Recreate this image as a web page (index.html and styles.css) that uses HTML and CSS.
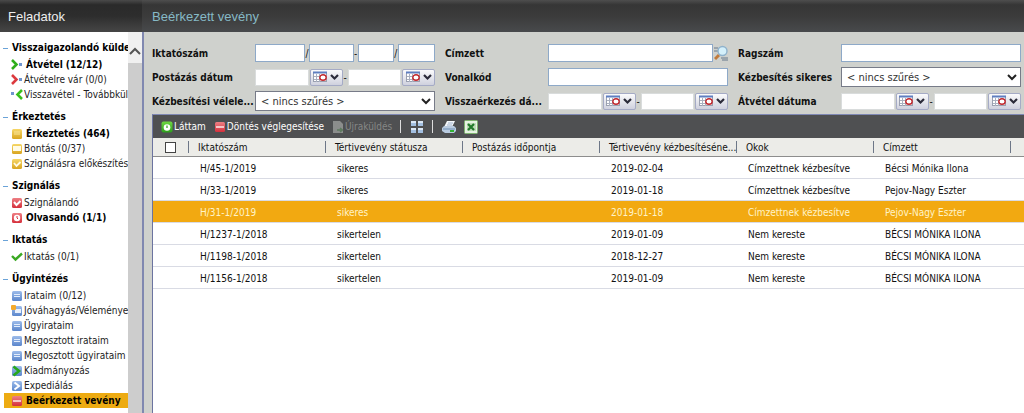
FILE: index.html
```
<!DOCTYPE html>
<html lang="hu">
<head>
<meta charset="UTF-8" />
<meta name="viewport" content="width=device-width, initial-scale=1" />
<title>Beérkezett vevény</title>
<link rel="stylesheet" href="styles.css">
</head>
<body>

<svg class="defs" aria-hidden="true">
  <defs>
    <linearGradient id="gYellow" x1="0" y1="0" x2="0" y2="1"><stop offset="0" stop-color="#f6d768"/><stop offset="1" stop-color="#d9a520"/></linearGradient>
    <linearGradient id="gRed" x1="0" y1="0" x2="0" y2="1"><stop offset="0" stop-color="#ee7f84"/><stop offset="1" stop-color="#d5303c"/></linearGradient>
    <linearGradient id="gBlue" x1="0" y1="0" x2="0" y2="1"><stop offset="0" stop-color="#9dbcea"/><stop offset="1" stop-color="#5b86cc"/></linearGradient>
    <linearGradient id="gGreen" x1="0" y1="0" x2="0" y2="1"><stop offset="0" stop-color="#6fd843"/><stop offset="1" stop-color="#2c9e1c"/></linearGradient>
  </defs>
  <symbol id="i-in-green" viewBox="0 0 12 12"><path d="M1 1l4.500 4.500L1 10" fill="none" stroke="#2fae1c" stroke-width="2.600"/><rect x="8" y="4" width="3" height="3" fill="#6f95cf"/></symbol>
  <symbol id="i-in-red" viewBox="0 0 12 12"><path d="M1 1l4.500 4.500L1 10" fill="none" stroke="#dc3a3f" stroke-width="2.600"/><rect x="8" y="4" width="3" height="3" fill="#6f95cf"/></symbol>
  <symbol id="i-back" viewBox="0 0 12 12"><path d="M11 1L6.500 5.500 11 10" fill="none" stroke="#38bf1c" stroke-width="2.600"/><rect x="0" y="3" width="3" height="3" fill="#6f95cf"/></symbol>
  <symbol id="i-yellow" viewBox="0 0 12 12"><rect x="1" y="1" width="10" height="10" rx="1.500" fill="url(#gYellow)"/><path d="M3 4h6M3 6h6" stroke="#f9e59a"/></symbol>
  <symbol id="i-yellow-open" viewBox="0 0 12 12"><rect x="1" y="1" width="10" height="10" rx="1.500" fill="url(#gYellow)"/><rect x="2" y="3" width="8" height="5" fill="#fffbe6"/></symbol>
  <symbol id="i-yellow-check" viewBox="0 0 12 12"><rect x="1" y="1" width="10" height="10" rx="1.500" fill="url(#gYellow)"/><path d="M3 5l2.500 3L9.500 4" fill="none" stroke="#fffbe6" stroke-width="1.800"/></symbol>
  <symbol id="i-red-check" viewBox="0 0 12 12"><rect x="1" y="1" width="10" height="10" rx="1.500" fill="url(#gRed)"/><path d="M3 5l2.500 3L9.500 4" fill="none" stroke="#fff" stroke-width="2"/></symbol>
  <symbol id="i-red-eye" viewBox="0 0 12 12"><rect x="1" y="1" width="10" height="10" rx="1.500" fill="url(#gRed)"/><circle cx="6" cy="6" r="3.200" fill="#fff"/><path d="M6 4v2l1 1" fill="none" stroke="#d5303c"/></symbol>
  <symbol id="i-check" viewBox="0 0 12 12"><path d="M1 5l3.500 3.500L11 2.500" fill="none" stroke="#3aa822" stroke-width="2.400"/></symbol>
  <symbol id="i-blue" viewBox="0 0 12 12"><rect x="1" y="1" width="10" height="10" rx="1.500" fill="url(#gBlue)"/><path d="M3 4.500h6M3 6.500h6" stroke="#e3edfb"/></symbol>
  <symbol id="i-blue-new" viewBox="0 0 12 12"><rect x="1" y="1" width="10" height="10" rx="1.500" fill="url(#gBlue)"/><rect x="4" y="4" width="6" height="4" fill="#e8effa"/><rect x="0" y="0" width="5" height="5" rx="1" fill="#f3a92c"/></symbol>
  <symbol id="i-blue-go" viewBox="0 0 12 12"><rect x="1" y="1" width="10" height="10" rx="1.500" fill="url(#gBlue)"/><path d="M2.500 1.500L8 6l-5.500 4.500" fill="none" stroke="#26a81c" stroke-width="2.600"/></symbol>
  <symbol id="i-blue-send" viewBox="0 0 12 12"><rect x="1" y="1" width="10" height="10" rx="1.500" fill="url(#gBlue)"/><path d="M3.500 2.500L8 6 3.500 9.500" fill="none" stroke="#fff" stroke-width="2"/></symbol>
  <symbol id="i-red-bar" viewBox="0 0 12 12"><rect x="1" y="1" width="10" height="10" rx="1.500" fill="url(#gRed)"/><path d="M2 6h8" stroke="#fbe3e3" stroke-width="1.600"/></symbol>
  <symbol id="i-seen" viewBox="0 0 12 12"><rect x="0.500" y="0.500" width="11" height="11" rx="2" fill="url(#gGreen)"/><circle cx="6" cy="6.500" r="3.300" fill="#fff"/><path d="M6 4.500v2.500" stroke="#2c9e1c" stroke-width="1.200"/></symbol>
  <symbol id="i-resend" viewBox="0 0 12 12"><path d="M1 0h7l3 3v9H1z" fill="#8b8d8c"/><path d="M5 9h5M8 7l2.500 2L8 11" fill="none" stroke="#5d7a5d" stroke-width="1.400"/></symbol>
  <symbol id="i-grid" viewBox="0 0 14 14"><path d="M1 1h5v5H1zM8 1h5v5H8zM1 8h5v5H1zM8 8h5v5H8z" fill="#a3bfe0"/><path d="M1 1h5v2H1zM8 1h5v2H8zM1 8h5v2H1zM8 8h5v2H8z" fill="#dbe7f5"/></symbol>
  <symbol id="i-print" viewBox="0 0 14 14"><path d="M5 1h8l-3 6H2z" fill="#f4f7fb"/><path d="M6 3h5M5 5h5" stroke="#9fb2cc"/><path d="M2 6h10l2 2v3l-2 2H3L0 11V8z" fill="#b9cbe0"/><path d="M1 9h12" stroke="#6f8fb5"/><path d="M8 11h4" stroke="#34b233" stroke-width="2"/></symbol>
  <symbol id="i-excel" viewBox="0 0 14 14"><rect x="0.500" y="0.500" width="13" height="13" rx="1" fill="#e6f3e2" stroke="#7eb36f"/><rect x="3" y="3" width="9" height="8" fill="#bfdcb8"/><path d="M4 4l6 6M10 4l-6 6" stroke="#217a2a" stroke-width="2.200"/></symbol>
  <symbol id="i-search" viewBox="0 0 14 16"><path d="M0 3h4M0 6h4M7 13h7M8 15h6" stroke="#66788c"/><path d="M5 10l-4 4" stroke="#c07a3c" stroke-width="3"/><circle cx="8.500" cy="6" r="4.500" fill="#d4f0fb" stroke="#8fb2cc" stroke-width="1.400"/></symbol>
  <symbol id="i-cal" viewBox="0 0 26 12"><rect x="0.500" y="1.500" width="13" height="9" fill="#fff" stroke="#9aa0b0"/><path d="M0 1.500h14" stroke="#5f7fc0" stroke-width="2"/><path d="M3.500 3v8M6.500 3v8M1 5.500h12M1 8.500h12" stroke="#aab0c0"/><ellipse cx="10" cy="6.500" rx="3.200" ry="2.800" fill="#fff" stroke="#c0272d" stroke-width="1.400"/><path d="M18 4l3.500 3.500L25 4" fill="none" stroke="#2b2b3a" stroke-width="2.200"/></symbol>
</svg>

<div class="app">
  <aside class="sidebar">
    <h2 class="bar">Feladatok</h2>
    <div class="side-body">
      <nav class="tree">
        <section>
          <h3>Visszaigazolandó külde</h3>
          <a href="#" class="strong"><svg class="icon"><use href="#i-in-green"/></svg>Átvétel (12/12)</a>
          <a href="#"><svg class="icon"><use href="#i-in-red"/></svg>Átvételre vár (0/0)</a>
          <a href="#"><svg class="icon"><use href="#i-back"/></svg>Visszavétel - Továbbkül</a>
        </section>
        <section>
          <h3>Érkeztetés</h3>
          <a href="#" class="strong"><svg class="icon"><use href="#i-yellow"/></svg>Érkeztetés (464)</a>
          <a href="#"><svg class="icon"><use href="#i-yellow-open"/></svg>Bontás (0/37)</a>
          <a href="#"><svg class="icon"><use href="#i-yellow-check"/></svg>Szignálásra előkészítés</a>
        </section>
        <section>
          <h3>Szignálás</h3>
          <a href="#"><svg class="icon"><use href="#i-red-check"/></svg>Szignálandó</a>
          <a href="#" class="strong"><svg class="icon"><use href="#i-red-eye"/></svg>Olvasandó (1/1)</a>
        </section>
        <section>
          <h3>Iktatás</h3>
          <a href="#"><svg class="icon"><use href="#i-check"/></svg>Iktatás (0/1)</a>
        </section>
        <section>
          <h3>Ügyintézés</h3>
          <a href="#"><svg class="icon"><use href="#i-blue"/></svg>Irataim (0/12)</a>
          <a href="#"><svg class="icon"><use href="#i-blue-new"/></svg>Jóváhagyás/Véleménye</a>
          <a href="#"><svg class="icon"><use href="#i-blue"/></svg>Ügyirataim</a>
          <a href="#"><svg class="icon"><use href="#i-blue"/></svg>Megosztott irataim</a>
          <a href="#"><svg class="icon"><use href="#i-blue"/></svg>Megosztott ügyirataim</a>
          <a href="#"><svg class="icon"><use href="#i-blue-go"/></svg>Kiadmányozás</a>
          <a href="#"><svg class="icon"><use href="#i-blue-send"/></svg>Expediálás</a>
          <a href="#" class="strong active"><svg class="icon"><use href="#i-red-bar"/></svg>Beérkezett vevény</a>
        </section>
      </nav>
      <div class="scroll">
        <button class="scroll-up" aria-label="Fel"><svg viewBox="0 0 12 8"><path d="M1 7l5-5 5 5" fill="none" stroke="#555" stroke-width="2"/></svg></button>
        <div class="thumb"></div>
      </div>
    </div>
  </aside>

  <main class="content">
    <h1 class="bar">Beérkezett vevény</h1>

    <form class="filters">
      <div class="field">
        <label for="ikt1">Iktatószám</label>
        <div class="ctrl number">
          <input type="text" id="ikt1" class="n1" /><span>/</span><input type="text" class="n2" aria-label="Iktatószám 2" /><span>-</span><input type="text" class="n3" aria-label="Iktatószám 3" /><span>/</span><input type="text" class="n4" aria-label="Iktatószám 4" />
        </div>
      </div>
      <div class="field">
        <label for="cimzett">Címzett</label>
        <div class="ctrl"><input type="text" id="cimzett" /><button type="button" class="lookup" aria-label="Keresés"><svg><use href="#i-search"/></svg></button></div>
      </div>
      <div class="field">
        <label for="ragszam">Ragszám</label>
        <div class="ctrl"><input type="text" id="ragszam" /></div>
      </div>

      <div class="field">
        <label for="post1">Postázás dátum</label>
        <div class="ctrl date">
          <input type="text" id="post1" /><button type="button" aria-label="Naptár"><svg><use href="#i-cal"/></svg></button><span>-</span><input type="text" aria-label="Postázás dátum vége" /><button type="button" aria-label="Naptár"><svg><use href="#i-cal"/></svg></button>
        </div>
      </div>
      <div class="field">
        <label for="vonalkod">Vonalkód</label>
        <div class="ctrl"><input type="text" id="vonalkod" /></div>
      </div>
      <div class="field">
        <label for="sikeres">Kézbesítés sikeres</label>
        <div class="ctrl"><select id="sikeres"><option>&lt; nincs szűrés &gt;</option></select></div>
      </div>

      <div class="field">
        <label for="velelem">Kézbesítési vélele...</label>
        <div class="ctrl"><select id="velelem"><option>&lt; nincs szűrés &gt;</option></select></div>
      </div>
      <div class="field">
        <label for="vissza1">Visszaérkezés dá...</label>
        <div class="ctrl date">
          <input type="text" id="vissza1" /><button type="button" aria-label="Naptár"><svg><use href="#i-cal"/></svg></button><span>-</span><input type="text" aria-label="Visszaérkezés dátum vége" /><button type="button" aria-label="Naptár"><svg><use href="#i-cal"/></svg></button>
        </div>
      </div>
      <div class="field">
        <label for="atvetel1">Átvétel dátuma</label>
        <div class="ctrl date">
          <input type="text" id="atvetel1" /><button type="button" aria-label="Naptár"><svg><use href="#i-cal"/></svg></button><span>-</span><input type="text" aria-label="Átvétel dátum vége" /><button type="button" aria-label="Naptár"><svg><use href="#i-cal"/></svg></button>
        </div>
      </div>
    </form>

    <div class="list">
      <div class="toolbar">
        <button><svg class="icon"><use href="#i-seen"/></svg>Láttam</button>
        <button><svg class="icon"><use href="#i-red-bar"/></svg>Döntés véglegesítése</button>
        <button disabled><svg class="icon"><use href="#i-resend"/></svg>Újraküldés</button>
        <span class="sep"></span>
        <button aria-label="Nézet"><svg class="tool"><use href="#i-grid"/></svg></button>
        <span class="sep"></span>
        <button aria-label="Nyomtatás"><svg class="tool"><use href="#i-print"/></svg></button>
        <button aria-label="Excel"><svg class="tool"><use href="#i-excel"/></svg></button>
      </div>
      <table>
        <colgroup><col class="c-check"><col class="c"><col class="c"><col class="c"><col class="c"><col class="c"><col class="c"><col></colgroup>
        <thead>
          <tr>
            <th><input type="checkbox" aria-label="Összes kijelölése" /></th>
            <th>Iktatószám</th>
            <th>Tértivevény státusza</th>
            <th>Postázás időpontja</th>
            <th>Tértivevény kézbesítéséne...</th>
            <th>Okok</th>
            <th>Címzett</th>
            <th></th>
          </tr>
        </thead>
        <tbody>
          <tr><td></td><td>H/45-1/2019</td><td>sikeres</td><td></td><td>2019-02-04</td><td>Címzettnek kézbesítve</td><td>Bécsi Mónika Ilona</td><td></td></tr>
          <tr><td></td><td>H/33-1/2019</td><td>sikeres</td><td></td><td>2019-01-18</td><td>Címzettnek kézbesítve</td><td>Pejov-Nagy Eszter</td><td></td></tr>
          <tr class="selected"><td></td><td>H/31-1/2019</td><td>sikeres</td><td></td><td>2019-01-18</td><td>Címzettnek kézbesítve</td><td>Pejov-Nagy Eszter</td><td></td></tr>
          <tr><td></td><td>H/1237-1/2018</td><td>sikertelen</td><td></td><td>2019-01-09</td><td>Nem kereste</td><td>BÉCSI MÓNIKA ILONA</td><td></td></tr>
          <tr><td></td><td>H/1198-1/2018</td><td>sikertelen</td><td></td><td>2018-12-27</td><td>Nem kereste</td><td>BÉCSI MÓNIKA ILONA</td><td></td></tr>
          <tr><td></td><td>H/1156-1/2018</td><td>sikertelen</td><td></td><td>2019-01-09</td><td>Nem kereste</td><td>BÉCSI MÓNIKA ILONA</td><td></td></tr>
        </tbody>
      </table>
    </div>
  </main>
</div>

</body>
</html>
```
FILE: styles.css
```
* {
  box-sizing: border-box;
}
body {
  margin: 0;
  font-family: "DejaVu Sans Condensed", "DejaVu Sans", Tahoma, sans-serif;
  font-size: 10px;
  color: #111;
  background: #fff;
}
button, input, select {
  font: inherit;
  color: inherit;
  margin: 0;
}
button {
  padding: 0;
  border: none;
  background: none;
}
.defs {
  position: absolute;
  width: 0;
  height: 0;
}
.app {
  display: flex;
  min-height: 100vh;
}
.bar {
  margin: 0;
  height: 32px;
  line-height: 33px;
  padding-left: 8px;
  font-family: "Liberation Sans", Arial, sans-serif;
  font-size: 13px;
  font-weight: 400;
  color: #eee;
  background: linear-gradient(#4a4a4a, #2a2a2a 15%, #2d2d2d 50%, #464646);
}

/* sidebar */
.sidebar {
  width: 142px;
  flex: none;
  display: flex;
  flex-direction: column;
}
.side-body {
  flex: 1;
  display: flex;
}
.tree {
  flex: 1;
  min-width: 0;
  padding-top: 7px;
  overflow: hidden;
}
.tree section {
  margin-bottom: 6px;
}
.tree h3 {
  margin: 0;
  padding-left: 12px;
  height: 18px;
  line-height: 18px;
  font-size: 10px;
  color: #000;
  white-space: nowrap;
  background: linear-gradient(#6aa3d8, #6aa3d8) 3px 9px / 5px 1px no-repeat;
}
.tree a {
  display: flex;
  align-items: center;
  gap: 1px;
  height: 15px;
  margin-left: 4px;
  padding-left: 7px;
  color: #222;
  text-decoration: none;
  white-space: nowrap;
}
.tree a.strong {
  gap: 3px;
  font-weight: 700;
  color: #000;
}
.tree a.active {
  background: #edab12;
}
.icon {
  width: 12px;
  height: 12px;
  flex: none;
}
.scroll {
  width: 14px;
  display: flex;
  flex-direction: column;
}
.scroll-up {
  height: 31px;
  padding: 6px 1px 0 1px;
  background: #f0f0f0;
}
.scroll-up svg {
  display: block;
  width: 12px;
  height: 8px;
}
.thumb {
  flex: 1;
  background: #cdcdcd;
}

/* content */
.content {
  flex: 1;
  min-width: 0;
  display: flex;
  flex-direction: column;
  background: #cfd1cd;
  box-shadow: inset 2px 0 #8088b0;
}
.content .bar {
  padding-left: 10px;
  color: #86b9c6;
  background: linear-gradient(#4e4e4e, #363636 15%, #3b3b3b 50%, #484a4c);
}
.filters {
  display: grid;
  grid-template-columns: repeat(3, 1fr);
  column-gap: 10px;
  row-gap: 4px;
  padding: 11px 3px 3px 10px;
}
.field {
  display: flex;
  align-items: center;
  height: 20px;
  min-width: 0;
}
.field label {
  width: 103px;
  flex: none;
  font-weight: 700;
  white-space: nowrap;
}
.ctrl {
  flex: 1;
  min-width: 0;
  display: flex;
  align-items: center;
}
.ctrl input {
  flex: 1;
  min-width: 0;
  height: 18px;
  padding: 0 3px;
  border: 1px solid #8ea9c8;
  background: #fff;
}
.number span {
  width: 4px;
  text-align: center;
}
.number .n1 { flex: 52; }
.number .n2 { flex: 45; }
.number .n3 { flex: 35; }
.number .n4 { flex: 36; }
.date input {
  height: 17px;
  border-color: #d9dcdc;
}
.date button {
  width: 33px;
  height: 17px;
  flex: none;
  margin-left: 1px;
  border: 1px solid #a5abc6;
  border-radius: 2px;
  background: linear-gradient(#fbfbfc, #cfd1de);
}
.date button svg {
  display: block;
  width: 26px;
  height: 12px;
  margin: 0 auto;
}
.date span {
  width: 5px;
  text-align: center;
}
.ctrl select {
  width: 100%;
  height: 20px;
  padding: 0 5px;
  font-size: 11px;
  color: #333;
  border: 1px solid #777b88;
  border-radius: 0;
  appearance: none;
  background: #fff url("data:image/svg+xml,%3Csvg xmlns='http://www.w3.org/2000/svg' viewBox='0 0 10 7'%3E%3Cpath d='M1 1l4 4 4-4' fill='none' stroke='%23222' stroke-width='2'/%3E%3C/svg%3E") right 3px center / 10px 7px no-repeat;
}
.lookup {
  width: 14px;
  height: 16px;
  flex: none;
  margin-left: 1px;
}
.lookup svg {
  display: block;
  width: 14px;
  height: 16px;
}

/* list */
.list {
  flex: 1;
  margin-left: 10px;
  border-top: 1px solid #7f88b4;
  border-left: 1px solid #6c74a0;
  background: #fff;
}
.toolbar {
  display: flex;
  align-items: center;
  height: 23px;
  padding-left: 8px;
  background: #4f5052;
}
.toolbar button {
  display: flex;
  align-items: center;
  gap: 1px;
  margin-right: 8px;
  color: #fff;
}
.toolbar button:disabled {
  color: #858786;
}
.tool {
  width: 14px;
  height: 14px;
}
.sep {
  width: 1px;
  height: 13px;
  margin-right: 9px;
  background: #ddd;
}
table {
  width: 100%;
  table-layout: fixed;
  border-collapse: separate;
  border-spacing: 0;
}
.c-check { width: 36px; }
.c { width: 137px; }
th {
  height: 19px;
  padding: 0 0 0 9px;
  font-weight: 400;
  text-align: left;
  white-space: nowrap;
  border-bottom: 1px solid #8d8d8d;
  background: #ecece8 linear-gradient(#6d7787, #6d7787) right 3px / 1px 12px no-repeat;
}
th:first-child {
  padding: 0 0 0 12px;
}
th:last-child {
  background-image: none;
}
th input {
  display: block;
  appearance: none;
  width: 11px;
  height: 11px;
  border: 1px solid #444;
  background: #fff;
}
td {
  height: 22px;
  padding: 1px 0 0 11px;
  white-space: nowrap;
  border-bottom: 1px solid #d9dbe4;
}
.selected td {
  color: #fff3c8;
  background: #f2a911;
}
```
